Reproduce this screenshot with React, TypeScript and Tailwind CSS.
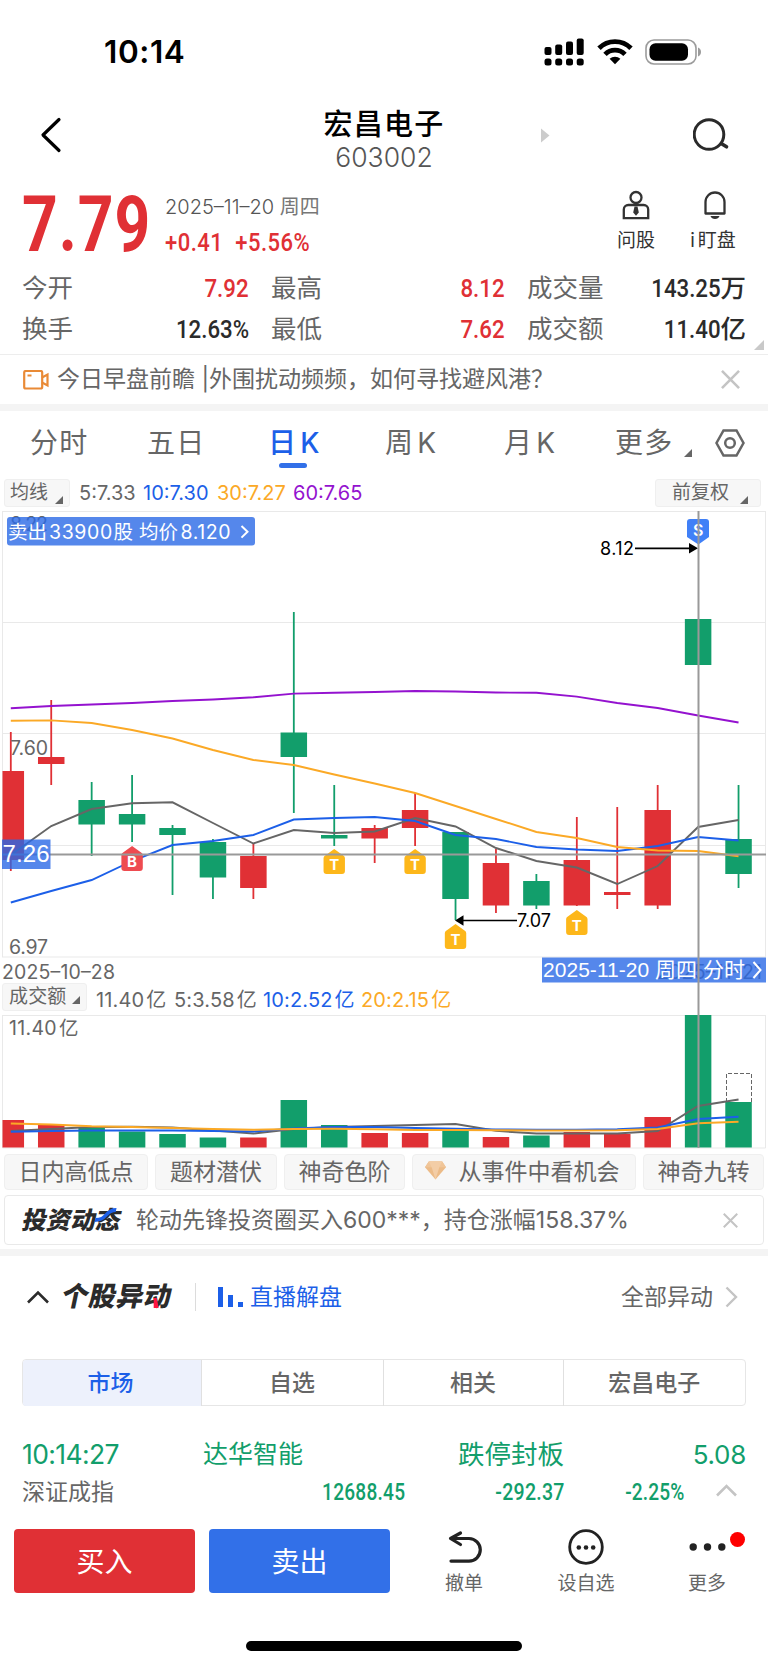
import type { ReactNode } from "react";

type Candle = [high: number, top: number, bottom: number, low: number, volume: number, up?: boolean];

const GREEN = "#129e6b";
const RED = "#e03035";
const STEP = 40.43;
const centerX = (i: number) => 10.8 + i * STEP;

// high, body top, body bottom, low, volume top (chart units), rising day
const candles: Candle[] = [
    [732, 771, 860, 871, 1120, true],
    [700, 757, 764, 785, 1125, true],
    [782, 800, 824.5, 856, 1128],
    [775, 814, 824.5, 842, 1131.5],
    [825, 828, 835, 895, 1134],
    [839, 842, 877.5, 899, 1137.5],
    [843, 856, 888, 899, 1137.5, true],
    [612, 732.5, 757, 813, 1100],
    [785, 835, 838.5, 846, 1125],
    [825, 828, 838.5, 863, 1133, true],
    [793, 810, 828, 846, 1133, true],
    [832, 832, 899, 920, 1131],
    [849, 863, 905.5, 913, 1137, true],
    [874, 881, 905.5, 909, 1135.5],
    [817, 860, 905.5, 906, 1132, true],
    [807, 892, 895, 909, 1134, true],
    [785, 810, 905.5, 909, 1117, true],
    [619, 619, 665, 665, 1015],
    [785, 839, 874, 888, 1102],
];

const priceLines = [
    { color: "#9412cf", data: [708.3, 706, 704.5, 703, 701, 699.5, 697.3, 693.6, 692.7, 692, 691, 691.5, 692.5, 692.8, 696.6, 703, 708, 715.5, 722.5] },
    { color: "#666666", data: [855, 826, 809, 803.3, 802.3, 823, 843.5, 830, 833, 831.5, 818, 826.5, 848, 861, 867.5, 884, 866, 827, 820] },
    { color: "#1c5fe8", data: [902.5, 891, 880, 861, 845, 841, 835, 819.5, 818, 817, 821, 835, 839, 847, 849.5, 851, 846, 837, 840.5] },
    { color: "#fba926", data: [720.8, 720.4, 723, 730, 738.5, 750, 760, 765, 774.5, 783.5, 793, 806, 819, 832, 838, 847, 850.5, 851, 856.3] },
];

const volumeLines = [
    { color: "#666666", data: [1131, 1129, 1127, 1126.8, 1127.5, 1130.5, 1133.5, 1129, 1127, 1126, 1125, 1124, 1130.8, 1133.6, 1133.5, 1133.5, 1131, 1106, 1099.5] },
    { color: "#1c5fe8", data: [1131.8, 1131, 1130.5, 1130.5, 1130.5, 1131, 1131.5, 1128.5, 1127, 1127, 1128, 1128.8, 1129.5, 1129.8, 1129.8, 1129.2, 1127.5, 1119, 1116.8] },
    { color: "#fba926", data: [1123.5, 1124.5, 1126.2, 1127, 1128, 1129, 1129.8, 1129, 1128.8, 1129.3, 1130, 1130, 1130.2, 1130.5, 1130.5, 1130.3, 1129, 1123.3, 1121.8] },
];

const toPoints = (data: number[]) => data.map((y, i) => `${centerX(i)},${y}`).join(" ");

const markers = [
    { i: 3, y: 846, label: "B", color: "#ee4b50" },
    { i: 8, y: 849, label: "T", color: "#fdb71a" },
    { i: 10, y: 849, label: "T", color: "#fdb71a" },
    { i: 11, y: 924, label: "T", color: "#fdb71a" },
    { i: 14, y: 910, label: "T", color: "#fdb71a" },
];

function Din({ className, children }: { className: string; children: ReactNode }) {
    return (
        <span className={`inline-block whitespace-nowrap font-['Roboto','Noto_Sans_CJK_SC',sans-serif] ${className}`}>
            {children}
        </span>
    );
}

function Corner({ className }: { className?: string }) {
    return (
        <svg className={className} width="8" height="8" viewBox="0 0 8 8">
            <path d="M8 0v8H0z" fill="currentColor" />
        </svg>
    );
}

function Close({ size }: { size: number }) {
    return (
        <svg width={size} height={size} viewBox="0 0 20 20" stroke="#c4c4c4" strokeWidth="2.7" fill="none">
            <path d="M1 1l18 18M19 1L1 19" />
        </svg>
    );
}

function StatusBar() {
    return (
        <div className="flex h-[92px] items-center justify-between pl-[104px] pr-[66px] pt-[12px]">
            <span className="text-[31.5px] font-semibold tracking-[0.6px] text-black">10:14</span>
            <div className="flex items-center">
                <svg width="40" height="28" viewBox="0 0 40 28">
                    <rect x="0.5" y="9" width="7" height="8" rx="2" />
                    <rect x="11.2" y="6.5" width="7" height="10.5" rx="2" />
                    <rect x="22" y="3.5" width="7" height="13.5" rx="2" />
                    <rect x="32.7" y="0.5" width="7" height="16.5" rx="2" />
                    <rect x="0.5" y="20.5" width="7" height="7" rx="2.5" />
                    <rect x="11.2" y="20.5" width="7" height="7" rx="2.5" />
                    <rect x="22" y="20.5" width="7" height="7" rx="2.5" />
                    <rect x="32.7" y="20.5" width="7" height="7" rx="2.5" />
                </svg>
                <svg className="ml-[13px]" width="36" height="26" viewBox="0 0 36 26" fill="none" stroke="#000" strokeWidth="4.8">
                    <path d="M2 9.3a22.5 22.5 0 0 1 32 0" />
                    <path d="M8 15.4a14 14 0 0 1 20 0" />
                    <path d="M12.6 19.8a8 8 0 0 1 10.8 0L18 25.3z" fill="#000" stroke="none" />
                </svg>
                <svg className="ml-[12px]" width="57" height="26" viewBox="0 0 57 26">
                    <rect x="1" y="1" width="50" height="24" rx="8" fill="none" stroke="#9b9b9b" strokeWidth="1.6" />
                    <rect x="4.5" y="4.3" width="38.5" height="17.4" rx="6" />
                    <path d="M53 8.5c4 1.5 4 7.5 0 9z" fill="#9b9b9b" />
                </svg>
            </div>
        </div>
    );
}

function Header() {
    return (
        <div className="flex h-[92px] items-center pl-[40px] pr-[38px] pt-[1px]">
            <svg className="mb-[7px]" width="22" height="36" viewBox="0 0 22 36" fill="none" stroke="#000" strokeWidth="3.2" strokeLinecap="round" strokeLinejoin="round">
                <path d="M19 2.5L3 18l16 15.5" />
            </svg>
            <div className="ml-[240px] w-[164px] pt-[3px] text-center">
                <div className="text-[29px] font-medium leading-[34px] tracking-[1.3px] text-black">宏昌电子</div>
                <div className="text-[26.5px] font-light leading-[31px] text-[#555]">603002</div>
            </div>
            <svg className="mb-[6px] ml-[75px]" width="9" height="15" viewBox="0 0 9 15">
                <path d="M0 .5v14l8.5-7z" fill="#cccccc" />
            </svg>
            <svg className="mb-[7px] ml-auto" width="37" height="36" viewBox="0 0 37 36" fill="none" stroke="#2a2a2a" strokeWidth="3" strokeLinecap="round">
                <circle cx="16" cy="17.5" r="14.8" />
                <path d="M29 27l4.5 2.8" strokeWidth="3.6" />
            </svg>
        </div>
    );
}

function PriceSummary() {
    return (
        <div className="flex h-[82px] pl-[22px]">
            <div className="w-[143px] pt-px">
                <Din className="origin-left scale-x-[.81] text-[77px] font-bold leading-[80px] tracking-[1.2px] text-[#e03035]">7.79</Din>
            </div>
            <div className="pt-[11px]">
                <div className="text-[20px] font-light leading-[24px] text-[#555]">
                    2025–11–20 <span className="font-normal text-[#777]">周四</span>
                </div>
                <Din className="mt-[7px] origin-left scale-x-[.83] whitespace-pre text-[26.5px] font-medium leading-[32px] tracking-[0.6px] text-[#e03035]">
                    +0.41  +5.56%
                </Din>
            </div>
            <div className="ml-auto flex pr-[28px] pt-[6px] text-[19px] leading-[24px] text-[#333]">
                <div className="flex w-[44px] flex-col items-center">
                    <svg width="28" height="30" viewBox="0 0 28 30" fill="none" stroke="#333" strokeWidth="2.3">
                        <circle cx="14" cy="7.5" r="5.5" />
                        <path d="M1.8 28.2V19.5a4.5 4.5 0 0 1 4.5-4.5h15.4a4.5 4.5 0 0 1 4.5 4.5v8.7z" />
                        <path d="M12.5 16.5h3l1.3 6-2.8 3.3-2.8-3.3z" fill="#333" stroke="none" />
                    </svg>
                    <span className="mt-[9px] whitespace-nowrap">问股</span>
                </div>
                <div className="ml-[28px] flex w-[54px] flex-col items-center">
                    <svg className="ml-[3px]" width="24" height="30" viewBox="0 0 24 30" fill="none" stroke="#333" strokeWidth="2.3">
                        <path d="M2.5 23.5V12a9.5 9.5 0 0 1 19 0v11.5z" strokeLinejoin="round" />
                        <path d="M7.5 26h9c-1 4-8 4-9 0z" fill="#333" stroke="none" />
                    </svg>
                    <span className="mt-[9px] flex whitespace-nowrap">
                        i<span className="ml-[3px]">盯盘</span>
                    </span>
                </div>
            </div>
        </div>
    );
}

function Stat({ label, value, unit, color }: { label: string; value: string; unit?: string; color: string }) {
    return (
        <div className="flex items-center">
            <span className="mr-auto text-[25.5px] text-[#666]">{label}</span>
            <Din className={`origin-right scale-x-[.84] text-[26.5px] font-medium ${color}`}>{value}</Din>
            {unit && <span className={`text-[25.5px] font-medium ${color}`}>{unit}</span>}
        </div>
    );
}

function Stats() {
    return (
        <div className="relative grid h-[89px] auto-rows-[41px] grid-cols-[227px_234px_219px] gap-x-[22px] border-b border-[#ededed] pl-[22px] pt-[1px] leading-[41px]">
            <Stat label="今开" value="7.92" color="text-[#e03035]" />
            <Stat label="最高" value="8.12" color="text-[#e03035]" />
            <Stat label="成交量" value="143.25" unit="万" color="text-[#2b2b2b]" />
            <Stat label="换手" value="12.63%" color="text-[#2b2b2b]" />
            <Stat label="最低" value="7.62" color="text-[#e03035]" />
            <Stat label="成交额" value="11.40" unit="亿" color="text-[#2b2b2b]" />
            <Corner className="absolute bottom-[4px] right-[4px] size-[10px] text-[#c9c9c9]" />
        </div>
    );
}

function News() {
    return (
        <div className="flex h-[56px] items-center border-b-[7px] border-[#f4f4f4] pl-[23px] pr-[28px]">
            <svg width="26" height="20" viewBox="0 0 26 20" fill="none" stroke="#e98a36" strokeWidth="2.2">
                <rect x="1.2" y="1" width="18" height="17.5" rx="1.5" />
                <path d="M19 7.5l5.5-3v11l-5.5-3M4.5 5.5h4" />
            </svg>
            <span className="ml-[8px] whitespace-nowrap text-[23px] text-[#666]">今日早盘前瞻 |外围扰动频频，如何寻找避风港？</span>
            <div className="ml-auto">
                <Close size={19} />
            </div>
        </div>
    );
}

function Period({ label, k, className }: { label: string; k?: boolean; className: string }) {
    return (
        <span className={`whitespace-nowrap ${className}`}>
            {label}
            {k && <span className="ml-[3px]">K</span>}
        </span>
    );
}

function Periods() {
    return (
        <div className="flex h-[64px] items-center pl-[30px] text-[28px] tracking-[1.2px] text-[#666]">
            <Period label="分时" className="w-[117px]" />
            <Period label="五日" className="w-[121px]" />
            <div className="relative w-[117px] font-medium text-[#1c5fe8]">
                <Period label="日" k className="" />
                <span className="absolute left-[11px] top-[41px] h-[5px] w-[28px] rounded-full bg-[#3270e8]" />
            </div>
            <Period label="周" k className="w-[119px]" />
            <Period label="月" k className="w-[111px]" />
            <Period label="更多" className="w-[69px]" />
            <Corner className="mt-[20px]" />
            <svg className="ml-[23px]" width="30" height="28" viewBox="0 0 30 28" fill="none" stroke="#666" strokeWidth="2.5">
                <path d="M8.5 1.5h13L28.5 14l-7 12.5h-13L1.5 14z" />
                <circle cx="15" cy="14" r="4.8" />
            </svg>
        </div>
    );
}

function Indicator() {
    return (
        <div className="flex h-[36px] items-center pl-[4px] pr-[7px] text-[20px] text-[#666]">
            <div className="flex h-[28px] w-[66px] items-center rounded-[3px] border border-[#efefef] bg-[#f7f7f7] pl-[5px]">
                <span className="text-[19px]">均线</span>
                <Corner className="ml-[7px] mt-[14px]" />
            </div>
            <span className="ml-[9px] w-[64px]">5:7.33</span>
            <span className="w-[74px] text-[#1c5fe8]">10:7.30</span>
            <span className="w-[76px] text-[#fba926]">30:7.27</span>
            <span className="text-[#9412cf]">60:7.65</span>
            <div className="ml-auto flex h-[28px] w-[106px] items-center rounded-[3px] border border-[#efefef] bg-[#f7f7f7] pl-[16px]">
                <span className="text-[19px]">前复权</span>
                <Corner className="ml-[11px] mt-[14px]" />
            </div>
        </div>
    );
}

function KLineChart() {
    return (
        <svg className="block" width="768" height="472" viewBox="0 511 768 472" fontSize="19.5">
            <g stroke="#e9e9e9" strokeWidth="1" fill="none">
                <path d="M2 511.5h764M2 622.5h764M2 733.5h764M2 845.5h764M2 957h764M2.5 511v446M765.5 511v446" />
            </g>
            <g fill="#666">
                <text x="10" y="531" textLength="38">8.22</text>
                <text x="2" y="978.5" textLength="113">2025–10–28</text>
                <text x="657" y="978.5" textLength="105">2025–11–21</text>
            </g>
            {candles.map(([high, top, bottom, low, , up], i) => {
                const left = Math.max(centerX(i) - 13.25, 2.5);
                return (
                    <g key={i} fill={up ? RED : GREEN}>
                        <rect x={centerX(i) - 0.9} y={high} width="1.8" height={low - high} />
                        <rect x={left} y={top} width={centerX(i) + 13.25 - left} height={bottom - top} />
                    </g>
                );
            })}
            <g fill="#666">
                <text x="10" y="755" textLength="38">7.60</text>
                <text x="9" y="954" textLength="39">6.97</text>
            </g>
            {priceLines.map((line) => (
                <polyline key={line.color} points={toPoints(line.data)} fill="none" stroke={line.color} strokeWidth="1.9" />
            ))}
            {markers.map((m) => (
                <g key={m.i} transform={`translate(${centerX(m.i)} ${m.y})`}>
                    <path d="M0 0L9 6.5a3 3 0 0 1 1.7 2.5V22a3 3 0 0 1-3 3H-7.7a3 3 0 0 1-3-3V9a3 3 0 0 1 1.7-2.5z" fill={m.color} />
                    <text x="0" y="21" fill="#fff" fontSize="15" fontWeight="700" textAnchor="middle">{m.label}</text>
                </g>
            ))}
            <path d="M690 519h16a3 3 0 0 1 3 3v15l-10.6 7.5L687 537v-15a3 3 0 0 1 3-3z" fill="#4080f7" />
            <text x="698.3" y="536" fill="#fff" fontSize="16" fontWeight="600" textAnchor="middle">S</text>
            <g fill="#000" fontSize="18">
                <text x="600" y="555" textLength="34">8.12</text>
                <path d="M635 547.4h54v-4.4l9 5.3-9 5.3v-4.4h-54z" />
                <text x="517" y="927" textLength="34">7.07</text>
                <path d="M517 919.7h-53.5v-4.5l-8.5 5.3 8.5 5.3v-4.5h53.5z" />
            </g>
            <path d="M2 854.5h764" stroke="#999" strokeWidth="2" />
            <g fill="#2b69e6" fillOpacity="0.8">
                <rect x="7" y="517" width="248" height="28.5" rx="3" />
                <rect x="2" y="839.5" width="48.5" height="29.5" />
                <rect x="542" y="957.5" width="224" height="25" />
            </g>
            <g fill="#fff">
                <text y="539">
                    <tspan x="8">卖出</tspan>
                    <tspan x="49" letterSpacing="0.6">33900</tspan>
                    <tspan x="113.5">股</tspan>
                    <tspan x="139">均价</tspan>
                    <tspan x="180.5" letterSpacing="0.6">8.120</tspan>
                </text>
                <g fontFamily="'Liberation Sans', 'Noto Sans CJK SC', sans-serif">
                    <text x="2.5" y="862" fontSize="24" textLength="47">7.26</text>
                    <text x="543" y="977" fontSize="21" textLength="202">2025-11-20 周四 分时</text>
                </g>
            </g>
            <path d="M241.5 526l6 5.8-6 5.8M753.5 962l7 8-7 8" fill="none" stroke="#fff" strokeWidth="2" />
        </svg>
    );
}

function VolumeHeader() {
    return (
        <div className="flex h-[32px] text-[20px] leading-[34px] tracking-[0.15px] text-[#666]">
            <div className="ml-[2px] flex h-[28px] w-[85px] items-center rounded-[3px] border border-[#efefef] bg-[#f7f7f7] pl-[6px]">
                <span className="text-[19px]">成交额</span>
                <Corner className="ml-[6px] mt-[5px]" />
            </div>
            <span className="ml-[9px] w-[78px]">11.40<span className="ml-[2px]">亿</span></span>
            <span className="w-[89px]">5:3.58<span className="ml-[2px]">亿</span></span>
            <span className="w-[98px] text-[#1c5fe8]">10:2.52<span className="ml-[2px]">亿</span></span>
            <span className="text-[#fba926]">20:2.15<span className="ml-[2px]">亿</span></span>
        </div>
    );
}

function VolumeChart() {
    return (
        <svg className="block" width="768" height="134" viewBox="0 1015 768 134" fontSize="19.5">
            <path d="M2 1015.5h764M2.5 1015v133h763v-133" fill="none" stroke="#e9e9e9" />
            <text x="9" y="1035" fill="#666" letterSpacing="0.3">
                11.40<tspan dx="2">亿</tspan>
            </text>
            {candles.map(([, , , , volume, up], i) => {
                const left = Math.max(centerX(i) - 13.25, 2.5);
                return <rect key={i} x={left} y={volume} width={centerX(i) + 13.25 - left} height={1147.5 - volume} fill={up ? RED : GREEN} />;
            })}
            <path d="M726.5 1102v-28.5h25v28.5" fill="none" stroke="#666" strokeDasharray="4 2" />
            {volumeLines.map((line) => (
                <polyline key={line.color} points={toPoints(line.data)} fill="none" stroke={line.color} strokeWidth="2" />
            ))}
        </svg>
    );
}

function Chip({ className, children }: { className: string; children: ReactNode }) {
    return (
        <div className={`flex h-[36px] items-center justify-center whitespace-nowrap rounded-[4px] border border-[#efefef] bg-[#f7f7f7] ${className}`}>
            {children}
        </div>
    );
}

function Chips() {
    return (
        <div className="mt-[5px] flex gap-[7px] pl-[4px] text-[23px] text-[#666]">
            <Chip className="w-[144px]">日内高低点</Chip>
            <Chip className="w-[122px]">题材潜伏</Chip>
            <Chip className="w-[121px]">神奇色阶</Chip>
            <Chip className="w-[224px] pr-[4px]">
                <svg className="mb-[4px] mr-[13px]" width="21" height="19" viewBox="0 0 22 19">
                    <path d="M4 0h14l4 6-11 13L0 6z" fill="#ecbb88" />
                    <path d="M4 0h14l4 6H0z" fill="#f0c598" />
                    <path d="M4 0l3 6h8l3-6zM7 6l4 13 4-13z" fill="#f3cda6" />
                </svg>
                从事件中看机会
            </Chip>
            <Chip className="w-[121px]">神奇九转</Chip>
        </div>
    );
}

function Invest() {
    return (
        <div className="mx-[4px] mt-[5px] flex h-[50px] items-center rounded-[4px] border border-[#e9e9e9] pl-[18px] pr-[25px]">
            <span className="relative w-[99px] -skew-x-12 whitespace-nowrap text-[24.5px] font-black leading-[30px] text-[#2b2b2b]">
                投资动态
                <svg className="absolute left-[72px] top-[3px]" width="20" height="15" viewBox="0 0 20 15" fill="none" stroke="#1c5fe8" strokeWidth="4">
                    <path d="M0 12c6 0 8-2 10-5s4-5 9-5" />
                </svg>
            </span>
            <span className="ml-[14px] whitespace-nowrap text-[23px] text-[#666]">轮动先锋投资圈买入600***，持仓涨幅158.37%</span>
            <div className="ml-auto">
                <Close size={15} />
            </div>
        </div>
    );
}

function MoversHeader() {
    return (
        <div className="mt-[4px] flex h-[89px] items-center border-t-[7px] border-[#f4f4f4] pl-[27px] pr-[30px] text-[23px]">
            <svg width="22" height="14" viewBox="0 0 22 14" fill="none" stroke="#2b2b2b" strokeWidth="2.6">
                <path d="M1 12.5L11 2.5l10 10" />
            </svg>
            <span className="relative ml-[13px] w-[110px] -skew-x-12 whitespace-nowrap text-[27px] font-black leading-[32px] tracking-[0.5px] text-[#2b2b2b]">
                个股异动
                <svg className="absolute left-[91px] top-[17px]" width="8" height="10" viewBox="0 0 8 10">
                    <path d="M1 0h3l4 10H3z" fill="#ff1440" />
                </svg>
            </span>
            <span className="ml-[23px] h-[28px] w-px bg-[#dcdcdc]" />
            <svg className="ml-[22px]" width="26" height="20" viewBox="0 0 26 20" fill="#1c5fe8">
                <rect width="5" height="20" />
                <rect x="10" y="8" width="5" height="12" />
                <rect x="20" y="15" width="5" height="5" />
            </svg>
            <span className="ml-[6px] text-[#1c5fe8]">直播解盘</span>
            <span className="ml-auto text-[#666]">全部异动</span>
            <svg className="ml-[12px]" width="13" height="22" viewBox="0 0 13 22" fill="none" stroke="#c4c4c4" strokeWidth="2.4">
                <path d="M1.5 1.5L11 11l-9.5 9.5" />
            </svg>
        </div>
    );
}

function MarketTabs() {
    return (
        <div className="ml-[21.5px] mr-[22px] mt-[21px] grid h-[47px] grid-cols-[179px_182px_180px_1fr] rounded-[4px] border border-[#e6e6e6] text-center text-[23px] font-medium leading-[46px] text-[#666]">
            <div className="rounded-l-[3px] border-r border-[#e0e0e0] bg-[#edf1fc] pr-[2px] text-[#1c5fe8]">市场</div>
            <div className="border-r border-[#e0e0e0]">自选</div>
            <div className="border-r border-[#e0e0e0]">相关</div>
            <div>宏昌电子</div>
        </div>
    );
}

function MoverRow() {
    return (
        <div className="mt-[34px] flex h-[30px] items-center px-[22px] text-[#129e6b]">
            <span className="w-[181px] text-[26.5px] tracking-[-0.6px]">10:14:27</span>
            <span className="w-[255px] text-[25px]">达华智能</span>
            <span className="text-[26.5px]">跌停封板</span>
            <span className="ml-auto pb-[2px] text-[26px] tracking-[-0.3px]">5.08</span>
        </div>
    );
}

function IndexRow() {
    return (
        <div className="mt-[4px] flex h-[36px] items-center pl-[22px] text-[23px] font-medium text-[#129e6b]">
            <span className="w-[183px] font-normal text-[#666]">深证成指</span>
            <div className="w-[200px] pt-[2px] text-right">
                <Din className="origin-right scale-x-[.83] tracking-[0.3px]">12688.45</Din>
            </div>
            <div className="w-[160px] pt-[2px] text-right">
                <Din className="origin-right scale-x-[.85] tracking-[0.3px]">-292.37</Din>
            </div>
            <div className="w-[120px] pt-[2px] text-right">
                <Din className="origin-right scale-x-[.83] tracking-[0.2px]">-2.25%</Din>
            </div>
            <svg className="mb-[4px] ml-[31px]" width="21" height="13" viewBox="0 0 21 13" fill="none" stroke="#c4c4c4" strokeWidth="2.6">
                <path d="M1 11.5L10.5 2l9.5 9.5" />
            </svg>
        </div>
    );
}

function ActionBar() {
    return (
        <div className="mt-[19px] flex h-[64px] pl-[14px] text-[19px] leading-[24px] text-[#666]">
            <button className="w-[181px] rounded-[4px] bg-[#e03035] pt-[2px] text-[28px] text-white">买入</button>
            <button className="ml-[14px] w-[181px] rounded-[4px] bg-[#3270e8] pt-[2px] text-[28px] text-white">卖出</button>
            <div className="ml-[37px] flex w-[74px] flex-col items-center">
                <svg className="ml-[3px] shrink-0" width="36" height="36" viewBox="0 0 36 36" fill="none" stroke="#222" strokeWidth="3.2" strokeLinecap="round">
                    <path d="M4 9.5h17a11.3 11.3 0 0 1 0 22.6H3" />
                    <path d="M12.5 4L2.5 9.5l10 6" strokeLinejoin="round" />
                </svg>
                <span className="mt-[7px]">撤单</span>
            </div>
            <div className="ml-[48px] flex w-[74px] flex-col items-center">
                <svg className="shrink-0" width="36" height="36" viewBox="0 0 36 36">
                    <circle cx="18" cy="18" r="16.3" fill="none" stroke="#222" strokeWidth="2.8" />
                    <circle cx="10.8" cy="18.5" r="2.3" fill="#222" />
                    <circle cx="18" cy="18.5" r="2.3" fill="#222" />
                    <circle cx="25.2" cy="18.5" r="2.3" fill="#222" />
                </svg>
                <span className="mt-[7px]">设自选</span>
            </div>
            <div className="relative ml-[47px] flex w-[74px] flex-col items-center">
                <svg className="shrink-0" width="37" height="36" viewBox="0 0 37 36" fill="#222">
                    <circle cx="4.2" cy="18" r="3.7" />
                    <circle cx="18.5" cy="18" r="3.7" />
                    <circle cx="32.8" cy="18" r="3.7" />
                </svg>
                <span className="absolute left-[60px] top-[3px] size-[15px] rounded-full bg-[#fe0000]" />
                <span className="mt-[7px]">更多</span>
            </div>
        </div>
    );
}

export default function App() {
    return (
        <div className="h-[1665px] w-[768px] overflow-hidden bg-white font-['Inter','Noto_Sans_CJK_SC',sans-serif]">
            <StatusBar />
            <Header />
            <PriceSummary />
            <Stats />
            <News />
            <Periods />
            <Indicator />
            <div className="relative">
                <KLineChart />
                <VolumeHeader />
                <VolumeChart />
                <span className="absolute left-[698px] top-0 h-[637px] w-[2px] -translate-x-[0.5px] bg-[#999]" />
            </div>
            <Chips />
            <Invest />
            <MoversHeader />
            <MarketTabs />
            <MoverRow />
            <IndexRow />
            <ActionBar />
            <div className="mx-auto mt-[48px] h-[10px] w-[276px] rounded-full bg-black" />
        </div>
    );
}
